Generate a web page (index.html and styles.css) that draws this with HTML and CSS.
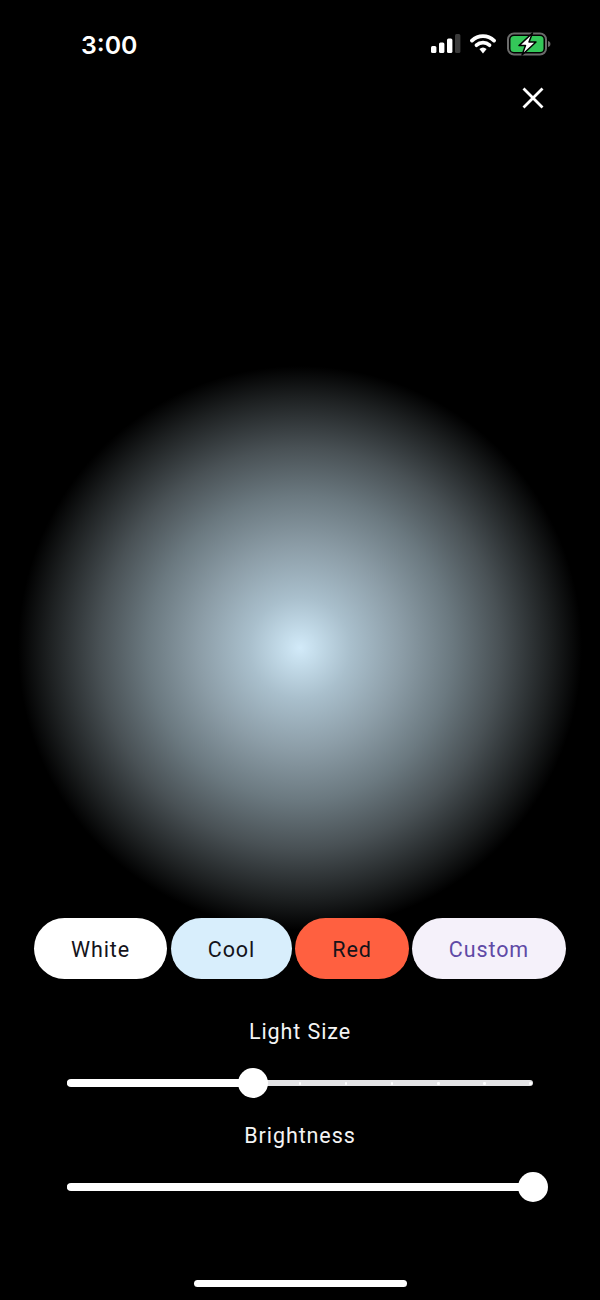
FILE: index.html
```html
<!DOCTYPE html>
<html lang="en">
<head>
<meta charset="utf-8">
<title>Light</title>
<link rel="stylesheet" href="styles.css">
</head>
<body>
<main class="screen">
  <header class="status">
    <span class="time">3:00</span>
    <div class="status-icons">
      <svg class="signal" width="30" height="20" viewBox="0 0 30 20">
        <rect x="0" y="12" width="5.4" height="7" rx="1.5" fill="#fff"/>
        <rect x="8" y="8.5" width="5.4" height="10.5" rx="1.5" fill="#fff"/>
        <rect x="16" y="4.5" width="5.4" height="14.5" rx="1.5" fill="#fff"/>
        <rect x="24" y="0" width="5.4" height="19" rx="1.5" fill="#3a3a3a"/>
      </svg>
      <svg class="wifi" width="26" height="20" viewBox="0 0 26 20">
        <path d="M2 6.6 A16 16 0 0 1 24 6.6" fill="none" stroke="#fff" stroke-width="3.8" stroke-linecap="round"/>
        <path d="M6.5 11.2 A9.6 9.6 0 0 1 19.5 11.2" fill="none" stroke="#fff" stroke-width="3.8" stroke-linecap="round"/>
        <path d="M9.4 15 A5.4 5.4 0 0 1 16.6 15 L13 19.4 Z" fill="#fff"/>
      </svg>
      <svg class="battery" width="44" height="24" viewBox="0 0 44 24">
        <rect x="1" y="1.5" width="38" height="21" rx="6" fill="none" stroke="#6b6b6b" stroke-width="2"/>
        <rect x="3.5" y="4" width="33" height="16" rx="3.5" fill="#34c759"/>
        <path d="M41 9 C43 9.6 43.4 10.6 43.4 12 C43.4 13.4 43 14.4 41 15 Z" fill="#6b6b6b"/>
        <path d="M25.5 1 L12 13.6 H18.5 L15 23 L29 10 H22 Z" fill="#fff" stroke="#000" stroke-width="1.5" stroke-linejoin="round"/>
      </svg>
    </div>
  </header>

  <div class="close-row">
    <svg class="close" width="24" height="24" viewBox="0 0 24 24">
      <path d="M2.5 2.5 L21.5 21.5 M21.5 2.5 L2.5 21.5" stroke="#fff" stroke-width="2.8" fill="none"/>
    </svg>
  </div>

  <div class="light-stage">
    <div class="light"></div>
  </div>

  <div class="chips">
    <button class="chip chip-white">White</button>
    <button class="chip chip-cool">Cool</button>
    <button class="chip chip-red">Red</button>
    <button class="chip chip-custom">Custom</button>
  </div>

  <section class="control control-size">
    <div class="control-label">Light Size</div>
    <div class="slider">
      <div class="track"></div>
      <div class="ticks"><i></i><i></i><i></i><i></i><i></i><i></i><i></i><i></i><i></i><i></i><i></i></div>
      <div class="fill" style="width:40%"><span class="thumb"></span></div>
    </div>
  </section>

  <section class="control control-bright">
    <div class="control-label">Brightness</div>
    <div class="slider">
      <div class="track"></div>
      <div class="fill" style="width:100%"><span class="thumb"></span></div>
    </div>
  </section>

  <div class="home-bar"></div>
</main>
</body>
</html>
```
FILE: styles.css
```css
* { box-sizing: border-box; }
html, body { margin: 0; padding: 0; background: #000; }
.screen {
  width: 600px;
  height: 1300px;
  background: #000;
  color: #fff;
  font-family: Roboto, "Liberation Sans", sans-serif;
  display: flex;
  flex-direction: column;
  overflow: hidden;
}
.status {
  height: 84px;
  padding: 29px 51px 0 81px;
  display: flex;
  justify-content: space-between;
  align-items: flex-start;
}
.time {
  font-family: Inter, "Liberation Sans", sans-serif;
  font-size: 24.8px;
  font-weight: 600;
  line-height: 32px;
}
.status-icons { display: flex; align-items: center; gap: 9px; padding-top: 3px; }
.battery { margin-left: 2px; margin-right: -2px; }
.close-row {
  height: 27px;
  padding-top: 2px;
  padding-right: 55px;
  display: flex;
  justify-content: flex-end;
}
.close { display: block; }
.light-stage {
  height: 807px;
  padding-top: 255px;
  display: flex;
  justify-content: center;
}
.light {
  width: 564px;
  height: 564px;
  border-radius: 50%;
  flex: none;
  background: radial-gradient(circle closest-side,
    #d2eaf9 0%,
    #c4dcea 6%,
    #a9bfcc 18%,
    #8c9da7 36%,
    #6b7980 54%,
    #495155 71%,
    #1d2021 89%,
    #000 100%);
}
.chips {
  height: 61px;
  padding: 0 34px;
  display: flex;
  gap: 3px;
}
.chip {
  height: 61px;
  border: 0;
  border-radius: 30.5px;
  padding: 2px 0 0;
  font-family: Roboto, "Liberation Sans", sans-serif;
  font-size: 21.5px;
  letter-spacing: 0.9px;
  color: #14131a;
}
.chip-white { width: 133px; margin-right: 1px; background: #fff; }
.chip-cool { width: 121px; background: #d8eefc; }
.chip-red { width: 114px; background: #ff6040; }
.chip-custom { width: 154px; background: #f5f1fa; color: #5f4aa6; }
.control { display: flex; flex-direction: column; align-items: center; }
.control-size { margin-top: 40px; }
.control-bright { margin-top: 25px; }
.control-label {
  font-size: 21.5px;
  line-height: 26px;
  letter-spacing: 0.9px;
  color: #f4f4f4;
}
.slider {
  position: relative;
  width: 466px;
  height: 30px;
  margin-top: 23px;
}
.track {
  position: absolute;
  left: 0;
  right: 0;
  top: 12px;
  height: 6px;
  border-radius: 3px;
  background: #e4e4e6;
}
.ticks {
  position: absolute;
  left: 0;
  right: 0;
  top: 14px;
  padding: 0 1px;
  display: flex;
  justify-content: space-between;
}
.ticks i { width: 2.5px; height: 2.5px; border-radius: 50%; background: #fff; }
.fill {
  position: absolute;
  left: 0;
  top: 11px;
  height: 8px;
  border-radius: 4px;
  background: #fff;
}
.thumb {
  position: absolute;
  right: -15px;
  top: -11px;
  width: 30px;
  height: 30px;
  border-radius: 50%;
  background: #fff;
}
.home-bar {
  width: 213px;
  height: 7px;
  border-radius: 4px;
  background: #fff;
  align-self: center;
  margin-top: 78px;
}
```
